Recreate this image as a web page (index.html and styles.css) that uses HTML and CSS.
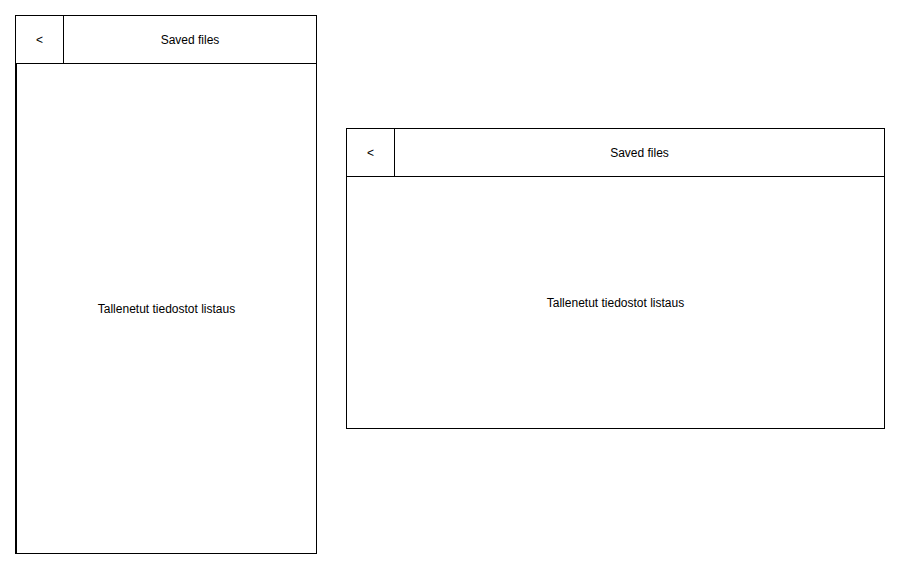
FILE: index.html
```html
<!DOCTYPE html>
<html>
<head>
<meta charset="utf-8">
<link rel="stylesheet" href="styles.css">
</head>
<body>
<div class="canvas">
  <div class="frame frame-portrait">
    <div class="header">
      <div class="back">&lt;</div>
      <div class="title">Saved files</div>
    </div>
    <div class="content content-thick">Tallenetut tiedostot listaus</div>
  </div>
  <div class="frame frame-landscape">
    <div class="header">
      <div class="back">&lt;</div>
      <div class="title">Saved files</div>
    </div>
    <div class="content">Tallenetut tiedostot listaus</div>
  </div>
</div>
</body>
</html>
```
FILE: styles.css
```css
html, body {
  margin: 0;
  padding: 0;
  background: #ffffff;
}
body {
  font-family: "Liberation Sans", Arial, sans-serif;
  font-size: 12px;
  color: #000000;
}
.canvas {
  display: flex;
  align-items: flex-start;
  gap: 29px;
  padding: 15px;
}
.frame {
  box-sizing: border-box;
  border: 1px solid #000000;
  display: flex;
  flex-direction: column;
  background: #ffffff;
}
.frame-portrait {
  width: 302px;
  height: 539px;
}
.frame-landscape {
  width: 539px;
  height: 301px;
  margin-top: 113px;
}
.header {
  display: flex;
  height: 47px;
  border-bottom: 1px solid #000000;
  flex: none;
}
.back {
  width: 47px;
  border-right: 1px solid #000000;
  display: flex;
  align-items: center;
  justify-content: center;
  flex: none;
}
.title {
  flex: 1;
  display: flex;
  align-items: center;
  justify-content: center;
}
.content {
  flex: 1;
  display: flex;
  align-items: center;
  justify-content: center;
}
.content-thick {
  border-left: 1px solid #000000;
  margin-left: 0;
}
```
